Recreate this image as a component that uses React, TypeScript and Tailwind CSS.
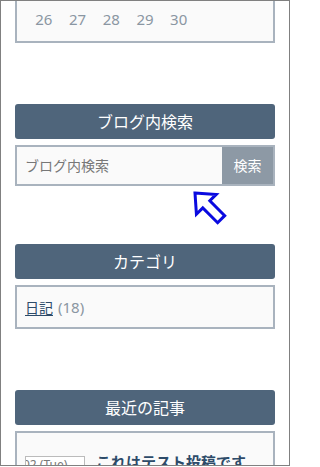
import React from 'react';

const jp = { fontFamily: '"Noto Sans", "Noto Sans CJK JP", sans-serif' };

const WidgetTitle: React.FC<{ title: string }> = ({ title }) => (
  <div className="h-[35px] rounded-[3px] bg-[#4f657b] text-white text-[16px] flex items-center justify-center mb-[6px]">
    {title}
  </div>
);

const App: React.FC = () => {
  const lastWeek = ['26', '27', '28', '29', '30', '', ''];

  return (
    <div className="w-[290px] h-[467px] bg-white" style={jp}>
      <div className="relative w-[290px] h-[466px] border border-[#808080] overflow-hidden bg-white">
        <div className="px-[14px] mt-[-5px]">
          {/* Calendar (bottom row only in view) */}
          <div className="border-2 border-[#a9b3be] bg-[#fafafa] p-[10px] mb-[61px]">
            <div className="grid grid-cols-7 h-[23px] items-center text-[15px] text-[#8a96a2]">
              {lastWeek.map((d, i) => (
                <span key={i} className="text-center">{d}</span>
              ))}
            </div>
          </div>

          {/* Blog search */}
          <WidgetTitle title="ブログ内検索" />
          <div className="flex h-[41px] border-2 border-[#a9b3be] bg-[#fafafa] mb-[58px]">
            <div className="flex-1 flex items-center pl-[8px] text-[14px] text-[#777]">ブログ内検索</div>
            <div className="w-[51px] bg-[#8d99a5] text-white text-[14px] flex items-center justify-center">検索</div>
          </div>

          {/* Category */}
          <WidgetTitle title="カテゴリ" />
          <div className="h-[44px] border-2 border-[#a9b3be] bg-[#fafafa] flex items-center px-[8px] text-[15px] mb-[61px]">
            <a className="text-[#2d4b69] underline underline-offset-2 text-[14px]">日記</a>
            <span className="ml-[5px] text-[#8a96a2]">(18)</span>
          </div>

          {/* Recent posts */}
          <WidgetTitle title="最近の記事" />
          <div className="border-2 border-[#a9b3be] bg-[#fafafa] px-[8px] pt-[23px] pb-4">
            <div className="flex gap-[11px]">
              <div className="w-[60px] h-[50px] border border-[#bbb] bg-white overflow-hidden text-[12px] text-[#777] leading-[16px] whitespace-nowrap">
                <div className="-ml-[3px]">02 (Tue)</div>
              </div>
              <div className="text-[15px] font-bold text-[#2d4b69] leading-[20px] -mt-[4px]">これはテスト投稿です</div>
            </div>
          </div>
        </div>

        {/* annotation arrow */}
        <svg className="absolute left-[185px] top-[185px]" width="45" height="42" viewBox="0 0 45 42">
          <g transform="translate(9 7) rotate(-45)">
            <path
              d="M0 0 L14 16 L5 16 L5 37 L-5 37 L-5 16 L-14 16 Z"
              fill="white"
              stroke="#0a0ae0"
              strokeWidth="3"
              strokeLinejoin="miter"
            />
          </g>
        </svg>
      </div>
    </div>
  );
};

export default App;
